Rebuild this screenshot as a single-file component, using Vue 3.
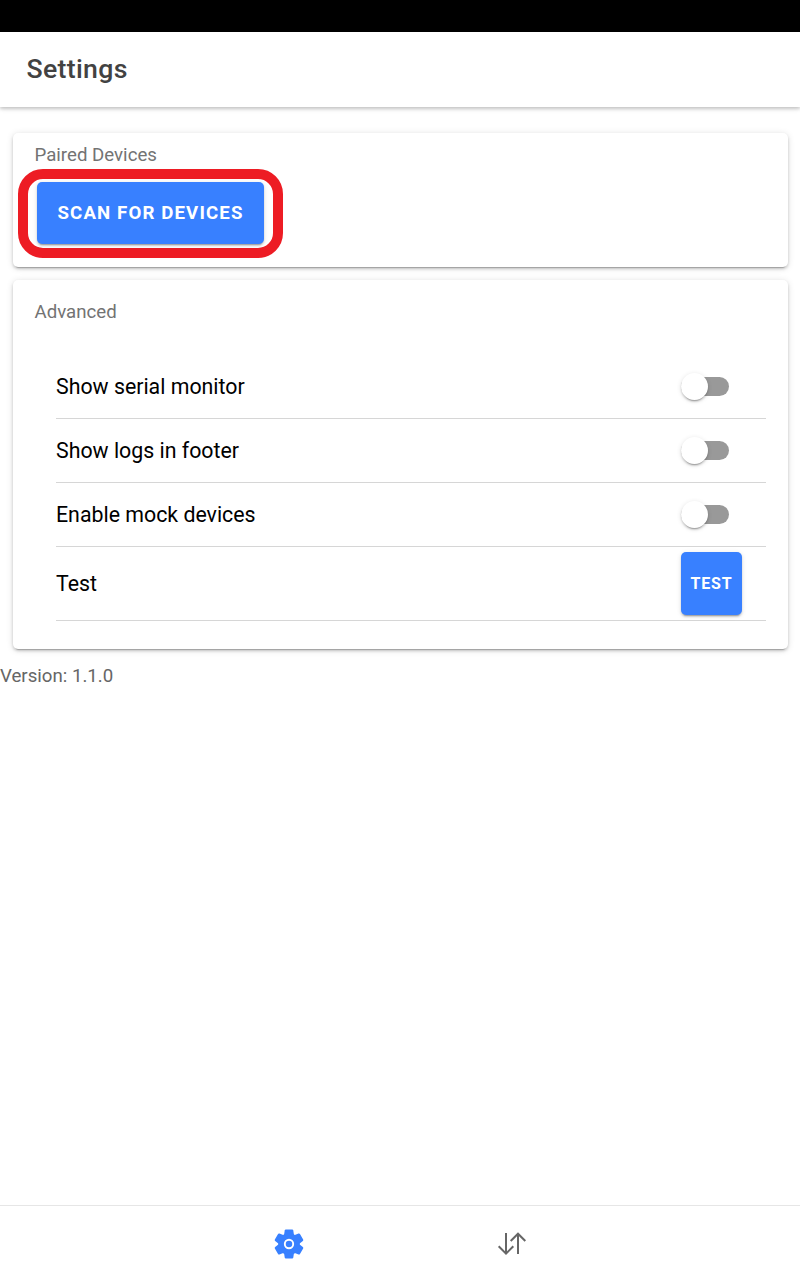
<script setup>
import { ref } from 'vue'

const options = ref([
  { label: 'Show serial monitor', on: false },
  { label: 'Show logs in footer', on: false },
  { label: 'Enable mock devices', on: false },
])
</script>

<template>
  <div class="app">
    <div class="status"></div>
    <header class="header"><h1 class="title">Settings</h1></header>
    <main class="content">
      <section class="card paired">
        <div class="caption">Paired Devices</div>
        <div class="highlight">
          <button class="btn scan">SCAN FOR DEVICES</button>
        </div>
      </section>
      <section class="card advanced">
        <div class="caption">Advanced</div>
        <div class="list">
          <div v-for="o in options" :key="o.label" class="row">
            <span class="label">{{ o.label }}</span>
            <button class="toggle" :class="{ on: o.on }" @click="o.on = !o.on">
              <span class="knob"></span>
            </button>
          </div>
          <div class="row tall">
            <span class="label">Test</span>
            <button class="btn test">TEST</button>
          </div>
        </div>
      </section>
      <div class="version">Version: 1.1.0</div>
    </main>
    <nav class="tabs">
      <div class="tab">
        <svg width="30" height="30" viewBox="-15 -15 30 30">
          <g fill="#3880ff">
            <circle r="10.8" />
            <g v-for="a in [0, 60, 120]" :key="a" :transform="`rotate(${a})`">
              <path d="M-4.9-9.5L-4.3-13.5Q-4.1-14.5-3.2-14.5H3.2Q4.1-14.5 4.3-13.5L4.9-9.5V9.5L4.3 13.5Q4.1 14.5 3.2 14.5H-3.2Q-4.1 14.5-4.3 13.5L-4.9 9.5Z" />
            </g>
          </g>
          <circle r="4.2" fill="none" stroke="#fff" stroke-width="1.9" />
        </svg>
      </div>
      <div class="tab">
        <svg width="30" height="30" viewBox="0 0 30 30" fill="none" stroke="#666" stroke-width="2">
          <path d="M9 4V25M1.7 17.3L9 24.6L16.3 17.3M21 25V4.5M13.7 12L21 4.7L28.3 12" />
        </svg>
      </div>
    </nav>
  </div>
</template>

<style>
body {
  background: #fff;
}
</style>

<style scoped>
.app {
  height: 1280px;
  display: flex;
  flex-direction: column;
  background: #fff;
  font-family: Roboto, sans-serif;
  overflow: hidden;
}
.status {
  height: 32px;
  background: #000;
}
.header {
  box-sizing: border-box;
  height: 75px;
  display: flex;
  align-items: center;
  padding: 0 0 2px 26.5px;
  box-shadow: 0 2px 3px rgba(0, 0, 0, 0.16), 0 1px 6px rgba(0, 0, 0, 0.12);
}
.title {
  margin: 0;
  font-size: 26.67px;
  line-height: 32px;
  font-weight: 500;
  letter-spacing: 0.32px;
  color: #424242;
}
.content {
  flex: 1;
  padding-top: 26px;
}
.card {
  box-sizing: border-box;
  width: 775px;
  margin: 0 0 13px 13px;
  border-radius: 5px;
  background: #fff;
  box-shadow: 0 4px 1px -3px rgba(0, 0, 0, 0.2), 0 2px 3px rgba(0, 0, 0, 0.17), 0 1px 7px rgba(0, 0, 0, 0.13);
}
.paired {
  height: 134px;
  padding: 10px 0 0 5px;
}
.paired .caption {
  margin-left: 16.5px;
}
.caption {
  font-size: 18.67px;
  line-height: 24px;
  color: #737373;
}
.highlight {
  box-sizing: border-box;
  width: 265px;
  height: 89px;
  margin-top: 2px;
  padding: 3px 0 0 9px;
  border: 10px solid #ed1c24;
  border-radius: 25px;
}
.btn {
  display: block;
  padding: 0;
  border: 0;
  border-radius: 5px;
  background: #3880ff;
  color: #fff;
  font-family: Roboto, sans-serif;
  font-weight: 700;
  box-shadow: 0 3px 1px -2px rgba(0, 0, 0, 0.2), 0 2px 2px rgba(0, 0, 0, 0.14), 0 1px 5px rgba(0, 0, 0, 0.12);
}
.scan {
  width: 227px;
  height: 62px;
  font-size: 18.67px;
  letter-spacing: 1.12px;
}
.advanced {
  height: 369px;
  padding: 20px 22px 0 21.5px;
}
.list {
  margin: 31px 0 0 21.5px;
}
.row {
  box-sizing: border-box;
  height: 64px;
  display: flex;
  align-items: center;
  justify-content: space-between;
  padding-right: 37px;
  border-bottom: 1px solid #d6d6d6;
}
.tall {
  height: 74px;
  padding-right: 24px;
}
.label {
  font-size: 21.33px;
  line-height: 28px;
  color: #000;
}
.toggle {
  width: 48px;
  height: 19px;
  display: flex;
  align-items: center;
  padding: 0;
  border: 0;
  border-radius: 10px;
  background: #999;
}
.toggle.on {
  justify-content: flex-end;
  background: #9cbfff;
}
.knob {
  flex: none;
  width: 27px;
  height: 27px;
  border-radius: 50%;
  background: #fff;
  box-shadow: 0 3px 1px -2px rgba(0, 0, 0, 0.2), 0 2px 2px rgba(0, 0, 0, 0.14), 0 1px 5px rgba(0, 0, 0, 0.12);
}
.test {
  width: 61px;
  height: 63px;
  font-size: 16px;
  letter-spacing: 0.8px;
}
.version {
  font-size: 18.67px;
  line-height: 28px;
  color: #666;
}
.tabs {
  box-sizing: border-box;
  height: 75px;
  display: flex;
  justify-content: center;
  padding-top: 2px;
  border-top: 1px solid #e6e6e6;
}
.tab {
  width: 223px;
  display: flex;
  align-items: center;
  justify-content: center;
}
</style>
